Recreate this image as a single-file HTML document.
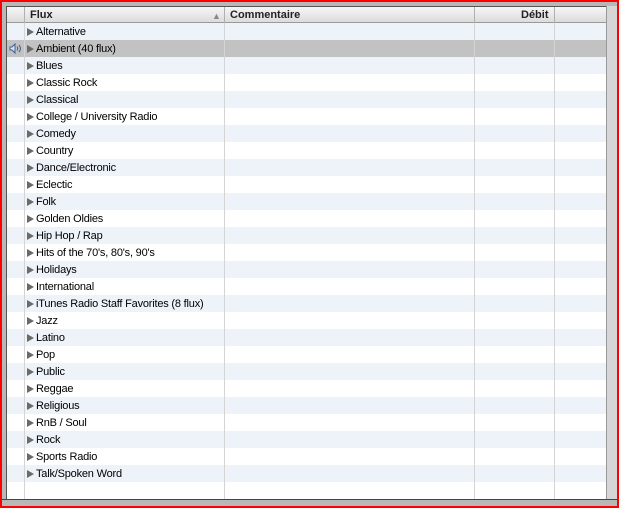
<!DOCTYPE html>
<html><head><style>
*{margin:0;padding:0;box-sizing:border-box}
body{width:619px;height:508px;background:#f00;position:relative;overflow:hidden;font-family:"Liberation Sans",sans-serif;font-size:11px;color:#000}
#frame{position:absolute;left:2px;top:2px;width:615px;height:504px;background:#b8b8b8}
#tbl{position:absolute;left:6px;top:6px;width:600px;height:493px;background:#fff;border-left:1px solid #555;border-top:1px solid #555;overflow:hidden}
#right{position:absolute;left:606px;top:6px;width:11px;height:493px;background:#d6d6d6;border-left:1px solid #999}
#bottom{position:absolute;left:2px;top:499px;width:615px;height:7px;background:#b8b8b8;border-top:1px solid #444}
.hdr{position:absolute;left:0;top:0;width:600px;height:16px;background:linear-gradient(#f6f6f6,#dcdcdc);border-bottom:1px solid #999}
.hdr span{position:absolute;top:2px;font-weight:bold;color:#222}
.row{position:absolute;left:0;width:600px;height:17px}
.l{background:#eef3fa}
.sel{background:#c2c2c2}
.row span{position:absolute;left:29px;top:3px;white-space:nowrap;letter-spacing:-0.2px}
.tri{position:absolute;left:20px;top:5px;width:0;height:0;border-left:7px solid #6a6a6a;border-top:4px solid transparent;border-bottom:4px solid transparent}
.vl{position:absolute;top:0;width:1px;height:493px;background:#d4d4d4}
.hv{position:absolute;top:0;width:1px;height:16px;background:#b0b0b0}
</style></head><body>
<div id="frame"></div>
<div id="tbl">
<div class="hdr"><span style="left:23px">Flux</span><span style="left:205px;font-weight:normal;color:#888;font-size:9px;top:4px">▲</span><span style="left:223px">Commentaire</span><span style="left:514px">Débit</span></div>
<div id="rows"></div>
<div class="vl" style="left:17px;top:16px"></div>
<div class="vl" style="left:217px;top:16px"></div>
<div class="vl" style="left:467px;top:16px"></div>
<div class="vl" style="left:547px;top:16px"></div>
<div class="hv" style="left:17px"></div><div class="hv" style="left:217px"></div><div class="hv" style="left:467px"></div><div class="hv" style="left:547px"></div>
</div>
<div id="right"></div>
<div id="bottom"></div>
<script>
var n=["Alternative","Ambient (40 flux)","Blues","Classic Rock","Classical","College / University Radio","Comedy","Country","Dance/Electronic","Eclectic","Folk","Golden Oldies","Hip Hop / Rap","Hits of the 70's, 80's, 90's","Holidays","International","iTunes Radio Staff Favorites (8 flux)","Jazz","Latino","Pop","Public","Reggae","Religious","RnB / Soul","Rock","Sports Radio","Talk/Spoken Word"];
var h="";
for(var i=0;i<n.length;i++){
var c=i==1?"sel":(i%2==0?"l":"");
h+='<div class="row '+c+'" style="top:'+(16+i*17)+'px">'+(i==1?'<svg style="position:absolute;left:2px;top:3px" width="14" height="11" viewBox="0 0 14 11"><path d="M1 4h2l3-3v9l-3-3H1z" fill="#dde6f2" stroke="#3d5f8f"/><path d="M8 3.5q1.5 2 0 4M10 2q3 3.5 0 7" fill="none" stroke="#3d5f8f"/></svg>':'')+'<i class="tri"></i><span>'+n[i]+'</span></div>';
}
document.getElementById("rows").innerHTML=h;
</script>
</body></html>
